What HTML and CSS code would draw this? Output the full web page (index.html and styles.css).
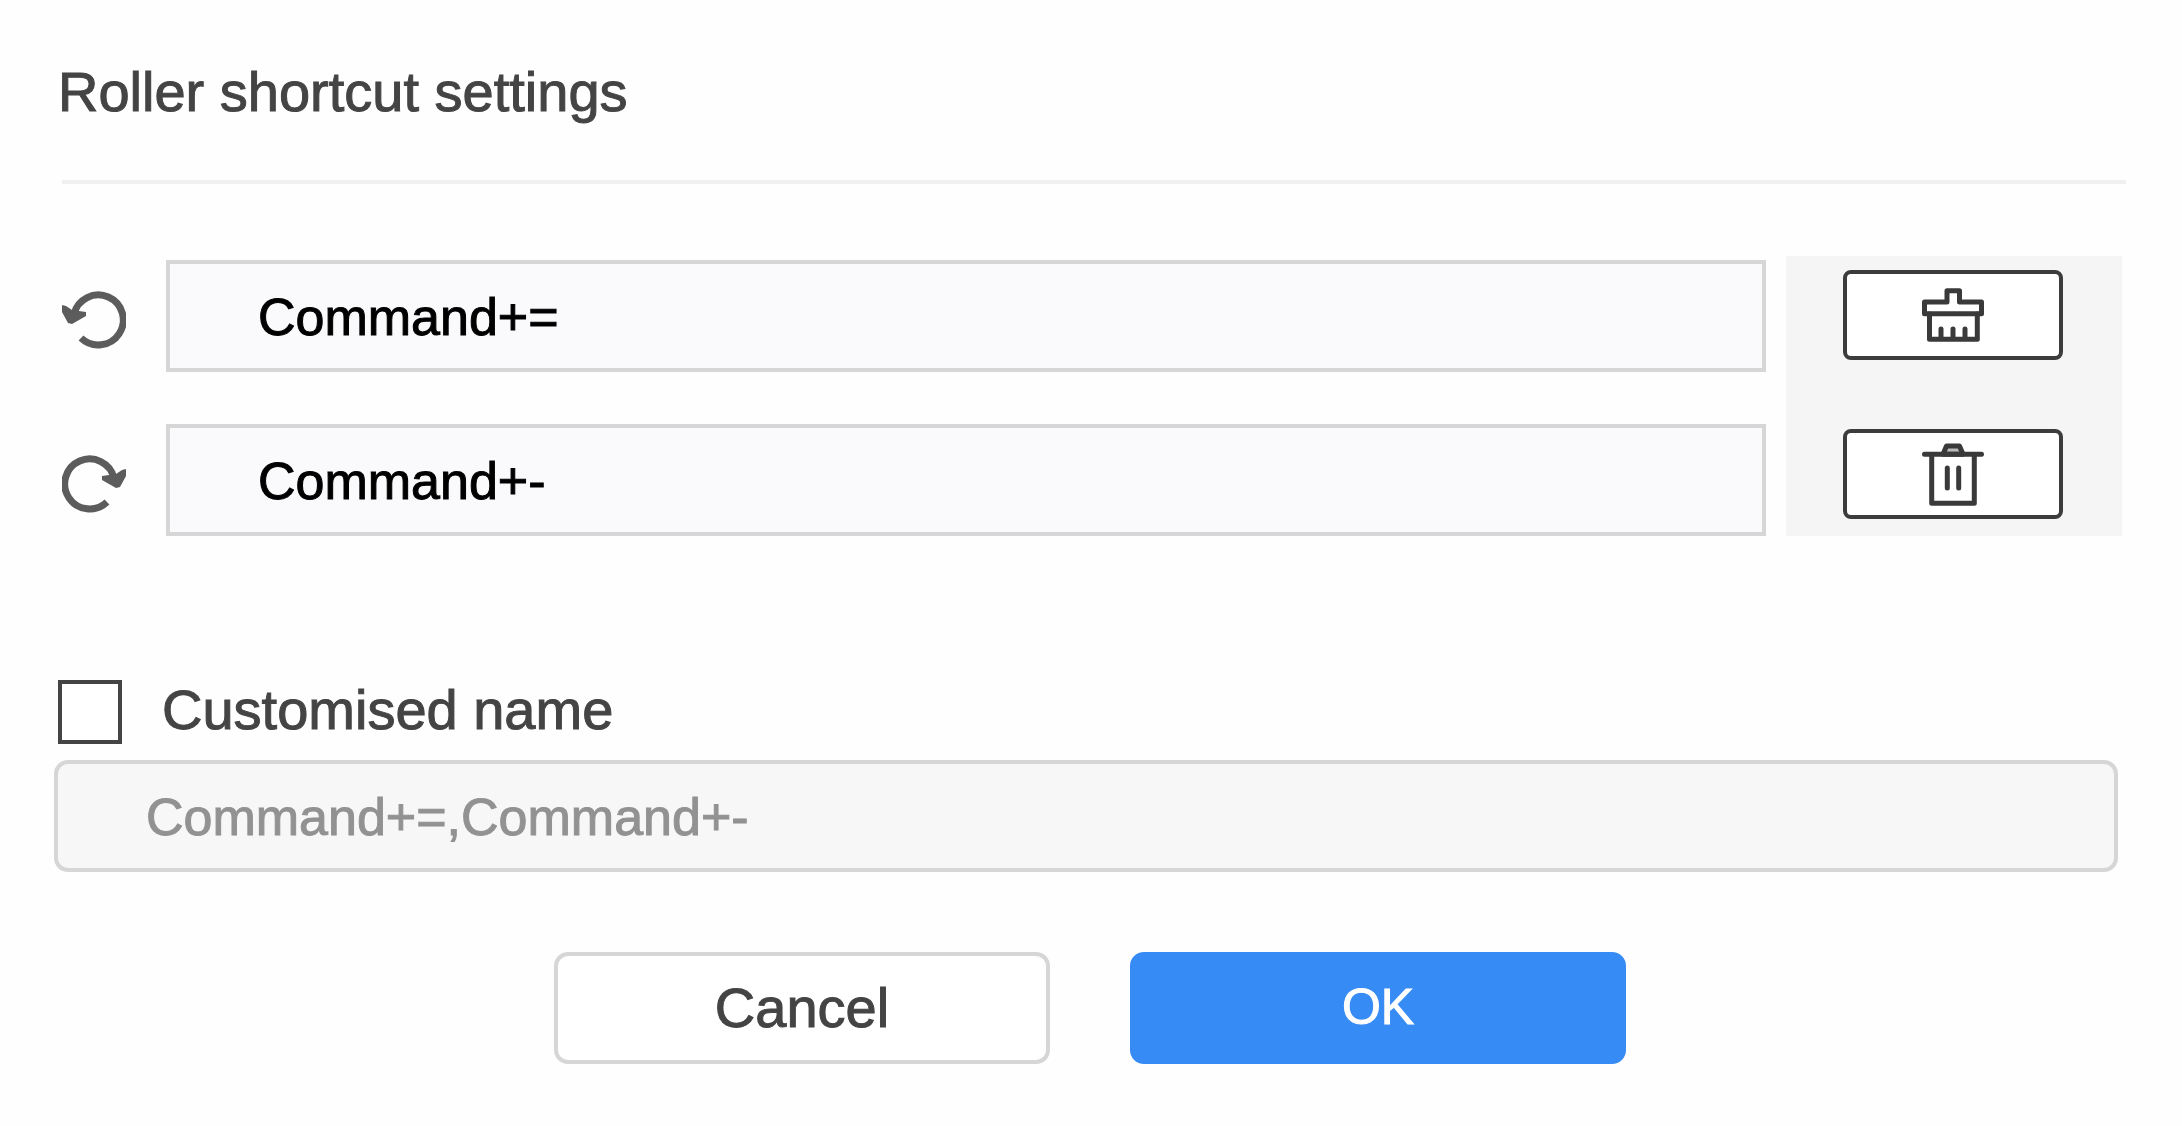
FILE: index.html
```
<!DOCTYPE html>
<html lang="en">
<head>
    <meta charset="UTF-8">
    <meta name="viewport" content="width=device-width, initial-scale=1.0">
    <title>Roller shortcut settings</title>
    <link rel="stylesheet" href="styles.css">
</head>
<body>

    <form class="dialog">
        <h1>Roller shortcut settings</h1>
        <hr>

        <div class="shortcuts">
            <div class="fields">
                <div class="field">
                    <svg class="roll-icon" viewBox="0 0 64 72" aria-hidden="true">
                        <path class="arc" d="M12 34A25 25 0 1 1 19 58"/>
                        <path class="head" d="M0 25L4 26L10 30L24 32L24 36L10 44L6 43L0 32Z"/>
                    </svg>
                    <input type="text" aria-label="Roll back" value="Command+=">
                </div>
                <div class="field">
                    <svg class="roll-icon" viewBox="0 0 64 72" aria-hidden="true">
                        <g transform="matrix(-1 0 0 1 64 0)">
                            <path class="arc" d="M12 34A25 25 0 1 1 19 58"/>
                            <path class="head" d="M0 25L4 26L10 30L24 32L24 36L10 44L6 43L0 32Z"/>
                        </g>
                    </svg>
                    <input type="text" aria-label="Roll forward" value="Command+-">
                </div>
            </div>

            <div class="tools">
                <button type="button" aria-label="Clear">
                    <svg viewBox="0 0 64 64" aria-hidden="true">
                        <path d="M3.5 19H26V7.7H38.5V19H60.5V30.7H3.5Z"/>
                        <path d="M8.5 31V56.3H56.3V31M20 46V56M32 46V56M44 46V56"/>
                    </svg>
                </button>
                <button type="button" aria-label="Delete">
                    <svg viewBox="0 0 64 64" aria-hidden="true">
                        <path class="lid" d="M22 12.3L25.5 4H38.5L42 12.3Z"/>
                        <path d="M3.5 12.3H60.5M10.7 13V61.3H53.3V13M26.3 26V46M37.7 26V46"/>
                    </svg>
                </button>
            </div>
        </div>

        <div class="custom">
            <div class="check">
                <input type="checkbox" id="useName">
                <label for="useName">Customised name</label>
            </div>
            <input type="text" class="name" aria-label="Name" value="Command+=,Command+-" disabled>
        </div>

        <div class="actions">
            <button type="button" class="cancel">Cancel</button>
            <button type="submit" class="ok">OK</button>
        </div>
    </form>

</body>
</html>
```
FILE: styles.css
```
* {
    box-sizing: border-box;
}
body {
    margin: 0;
    background-color: #fefefe;
    color: #444;
    font-family: Arial, "Liberation Sans", sans-serif;
    font-size: 56px;
    -webkit-text-stroke: 1px;
}
input, button {
    font-family: inherit;
    margin: 0;
}
h1 {
    margin: 0;
    padding: 60px 58px 56px;
    font-size: 56px;
    font-weight: normal;
    line-height: 64px;
}
hr {
    margin: 0 56px 0 62px;
    border: 0;
    border-top: 4px solid #f0f0f0;
}

/* shortcut rows */
.shortcuts {
    display: flex;
    gap: 20px;
    margin: 72px 60px 0 62px;
}
.fields {
    flex: 1;
    display: flex;
    flex-direction: column;
    gap: 52px;
    padding-top: 4px;
}
.field {
    display: flex;
    align-items: center;
    gap: 40px;
}
input[type="text"] {
    flex: 1;
    width: 100%;
    min-width: 0;
    height: 112px;
    padding: 2px 88px 0;
    border: 4px solid #d6d6d6;
    background-color: #fafafc;
    color: #000;
    font-size: 52px;
}
.roll-icon {
    flex: none;
    width: 64px;
    height: 72px;
}
.arc {
    fill: none;
    stroke: #5c5c5c;
    stroke-width: 7;
}
.head {
    fill: #5c5c5c;
}
.tools {
    display: flex;
    flex-direction: column;
    align-items: center;
    justify-content: space-between;
    width: 336px;
    padding: 14px 2px 17px 0;
    background-color: #f5f5f5;
}
.tools button {
    display: flex;
    align-items: center;
    justify-content: center;
    width: 220px;
    height: 90px;
    border: 4px solid #3c3c3c;
    border-radius: 8px;
    background-color: #fff;
}
.tools svg {
    width: 64px;
    height: 64px;
    fill: none;
    stroke: #3a3a3a;
    stroke-width: 5;
    stroke-linecap: round;
    stroke-linejoin: round;
}
.tools .lid {
    fill: #bbb;
}

/* custom name */
.custom {
    margin: 144px 64px 0 54px;
}
.check {
    display: flex;
    gap: 40px;
    height: 64px;
    margin: 0 4px 16px;
    line-height: 60px;
}
.check input {
    appearance: none;
    width: 64px;
    height: 64px;
    border: 4px solid #444;
    background-color: #fff;
}
.check input:checked {
    background-color: #378bf5;
}
input.name {
    display: block;
    border-radius: 14px;
    background-color: #f7f7f7;
    color: #929292;
}

/* dialog buttons */
.actions {
    display: flex;
    justify-content: center;
    gap: 80px;
    margin: 80px 2px 0 0;
}
.actions button {
    width: 496px;
    height: 112px;
    padding: 0 0 2px;
    border: 4px solid #d6d6d6;
    border-radius: 14px;
    background-color: #fff;
    color: #444;
    font-size: 56px;
}
.actions .ok {
    border-color: #378bf5;
    background-color: #378bf5;
    color: #fff;
    font-size: 50px;
}
```
